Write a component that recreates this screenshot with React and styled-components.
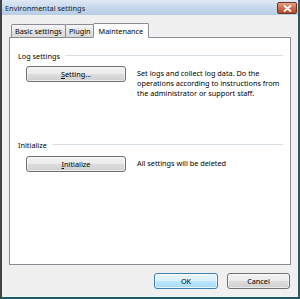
import styled, { createGlobalStyle } from "styled-components";

const GlobalStyle = createGlobalStyle`
  html, body {
    margin: 0;
    padding: 0;
    background: #ffffff;
  }
  body {
    font-family: "Noto Sans", "Open Sans", sans-serif;
    font-size: 7.3px;
    color: #000;
  }
`;

const tabs = ["Basic settings", "Plugin", "Maintenance"];

export default function App() {
  return (
    <>
      <GlobalStyle />
      <Window>
        <TitleBar>
          <Title>Environmental settings</Title>
          <CloseButton aria-label="Close">
            <svg width="9" height="7" viewBox="0 0 9 7">
              <path
                d="M1.5 1 L7.5 6 M7.5 1 L1.5 6"
                stroke="#fff"
                strokeWidth="1.8"
                strokeLinecap="round"
              />
            </svg>
          </CloseButton>
        </TitleBar>
        <Body>
          <TabStrip>
            {tabs.map((t) => (
              <Tab key={t} $active={t === "Maintenance"}>
                {t}
              </Tab>
            ))}
          </TabStrip>
          <Panel>
            <Section>
              <SectionHeader>
                <span>Log settings</span>
                <Rule />
              </SectionHeader>
              <ActionRow>
                <Button>
                  <u>S</u>etting...
                </Button>
                <Description>
                  Set logs and collect log data. Do the operations according to
                  instructions from the administrator or support staff.
                </Description>
              </ActionRow>
            </Section>
            <Section $top={41} $gap={5}>
              <SectionHeader>
                <span>Initialize</span>
                <Rule />
              </SectionHeader>
              <ActionRow>
                <Button>
                  <u>I</u>nitialize
                </Button>
                <Description>All settings will be deleted</Description>
              </ActionRow>
            </Section>
          </Panel>
          <Footer>
            <Button $default $width={64}>
              OK
            </Button>
            <Button $width={63}>Cancel</Button>
          </Footer>
        </Body>
      </Window>
    </>
  );
}

const Window = styled.div`
  box-sizing: border-box;
  width: 300px;
  height: 299px;
  display: flex;
  flex-direction: column;
  background: #f0f0f0;
  border-left: 2px solid #3f4448;
  border-right: 2px solid #2e5560;
  border-bottom: 2px solid #1d5b68;
`;

const TitleBar = styled.div`
  height: 15px;
  display: flex;
  align-items: center;
  justify-content: space-between;
  padding: 0 1px 0 3px;
  background: linear-gradient(#dfe9f4, #c2d5ea 60%, #b8cde4);
`;

const Title = styled.span`
  color: #111c2c;
  font-size: 7.4px;
`;

const CloseButton = styled.div`
  box-sizing: border-box;
  width: 20px;
  height: 12px;
  display: flex;
  align-items: center;
  justify-content: center;
  border: 1px solid #6d3424;
  border-radius: 2px;
  background: linear-gradient(#e8a48a, #d06a48 50%, #b9472a);
  margin-top: 1px;
`;

const Body = styled.div`
  flex: 1;
  display: flex;
  flex-direction: column;
  padding: 8px 7px 0 7px;
`;

const TabStrip = styled.div`
  display: flex;
  align-items: flex-end;
  height: 14px;
  padding-left: 2px;
  position: relative;
  z-index: 1;
`;

const Tab = styled.div`
  box-sizing: border-box;
  height: ${(p) => (p.$active ? "15px" : "13px")};
  padding: 0 ${(p) => (p.$active ? "5px" : "3px")};
  margin-left: ${(p) => (p.$active ? "-1px" : "0")};
  margin-right: ${(p) => (p.$active ? "0" : "-1px")};
  display: flex;
  align-items: center;
  border: 1px solid #898c95;
  border-bottom: ${(p) => (p.$active ? "1px solid #ffffff" : "none")};
  border-radius: 2px 2px 0 0;
  background: ${(p) =>
    p.$active ? "#ffffff" : "linear-gradient(#f6f6f6, #e6e6e6 50%, #d8d8d8)"};
  margin-bottom: ${(p) => (p.$active ? "-1px" : "0")};
`;

const Panel = styled.div`
  box-sizing: border-box;
  height: 228px;
  background: #ffffff;
  border: 1px solid #898c95;
  padding: 12px 7px 0 8px;
`;

const Section = styled.div`
  margin-top: ${(p) => (p.$top ? `${p.$top}px` : "0")};
  display: flex;
  flex-direction: column;
  gap: ${(p) => (p.$gap ? `${p.$gap}px` : "4px")};
`;

const SectionHeader = styled.div`
  display: flex;
  align-items: center;
  gap: 5px;
  height: 12px;
`;

const Rule = styled.div`
  flex: 1;
  height: 0;
  border-top: 1px solid #d5dfe5;
  border-bottom: 1px solid #ffffff;
`;

const ActionRow = styled.div`
  display: flex;
  align-items: flex-start;
  gap: 11px;
  padding-left: 8px;
`;

const Button = styled.div`
  box-sizing: border-box;
  flex: none;
  width: ${(p) => (p.$width ? `${p.$width}px` : "100px")};
  height: 16px;
  display: flex;
  align-items: center;
  justify-content: center;
  border: 1px solid ${(p) => (p.$default ? "#3c7fb1" : "#707070")};
  border-radius: 3px;
  color: #000;
  background: ${(p) =>
    p.$default
      ? "linear-gradient(#eaf6fd, #d9f0fc 50%, #bee6fd 50%, #a7d9f5)"
      : "linear-gradient(#f2f2f2, #ebebeb 50%, #dddddd 50%, #cfcfcf)"};
  box-shadow: inset 0 0 0 1px
    ${(p) => (p.$default ? "rgba(255,255,255,0.7)" : "rgba(255,255,255,0.6)")};

  u {
    text-decoration: underline;
    text-underline-offset: 1px;
  }
`;

const Description = styled.div`
  flex: none;
  width: 150px;
  line-height: 10px;
  padding-top: 2px;
`;

const Footer = styled.div`
  display: flex;
  justify-content: flex-end;
  gap: 9px;
  padding: 8px 1px 0 0;
`;
